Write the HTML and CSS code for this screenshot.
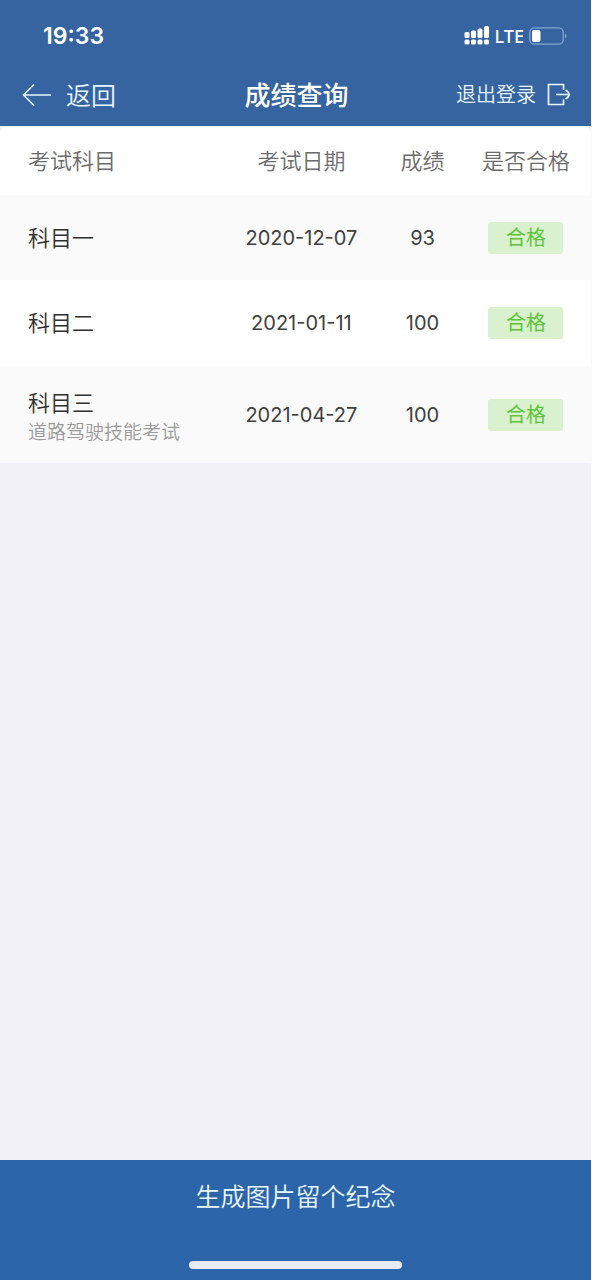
FILE: index.html
```html
<!DOCTYPE html>
<html lang="zh-CN">
<head>
<meta charset="utf-8">
<meta name="viewport" content="width=device-width, initial-scale=1">
<title>成绩查询</title>
<link rel="stylesheet" href="styles.css">
</head>
<body>
<div class="app">
  <header class="top">
    <div class="status">
      <time class="clock">19:33</time>
      <div class="indicators">
        <svg class="signal" width="26" height="20" viewBox="0 0 26 20" fill="#fff" aria-hidden="true">
          <rect x="0.500" y="13.500" width="5" height="5" rx="1.500"/><rect x="7" y="13.500" width="5" height="5" rx="1.500"/><rect x="13.500" y="13.500" width="5" height="5" rx="1.500"/><rect x="20" y="13.500" width="5" height="5" rx="1.500"/>
          <rect x="0.500" y="6" width="5" height="6" rx="1.500"/><rect x="7" y="4.500" width="5" height="7.500" rx="1.500"/><rect x="13.500" y="2.500" width="5" height="9.500" rx="1.500"/><rect x="20" y="0" width="5" height="12" rx="1.500"/>
        </svg>
        <span class="network">LTE</span>
        <svg class="battery" width="38" height="18" viewBox="0 0 38 18" aria-hidden="true">
          <rect x="0.800" y="0.800" width="33.400" height="16.400" rx="4.500" fill="none" stroke="#86a6d0" stroke-width="1.300"/>
          <rect x="3" y="3" width="8.500" height="12" rx="2" fill="#fff"/>
          <path d="M36 6.500c2 .8 2 4.200 0 5z" fill="#86a6d0"/>
        </svg>
      </div>
    </div>
    <nav class="bar">
      <a class="back" href="#">
        <svg width="30" height="24" viewBox="0 0 30 24" fill="none" stroke="#e9f5ff" stroke-width="1.500" aria-hidden="true"><path d="M29 12H1.500M12 1.500L1.500 12 12 22.500"/></svg>
        <span>返回</span>
      </a>
      <h1 class="title">成绩查询</h1>
      <a class="logout" href="#">
        <span>退出登录</span>
        <svg width="24" height="24" viewBox="0 0 24 24" fill="none" stroke="#e9f5ff" stroke-width="1.700" aria-hidden="true"><path d="M16.500 7V1.500H1.500V21.500H16.500V16.500M9 11.500H22.500M18.500 7C20.500 8 22 9.500 22.500 11.500 22 13.500 20.500 15 18.500 16"/></svg>
      </a>
    </nav>
  </header>
  <main class="content">
    <table class="scores">
      <thead>
        <tr><th class="subject" scope="col">考试科目</th><th class="date" scope="col">考试日期</th><th class="score" scope="col">成绩</th><th class="result" scope="col">是否合格</th></tr>
      </thead>
      <tbody>
        <tr><td class="subject">科目一</td><td>2020-12-07</td><td>93</td><td><span class="tag">合格</span></td></tr>
        <tr><td class="subject">科目二</td><td>2021-01-11</td><td>100</td><td><span class="tag">合格</span></td></tr>
        <tr class="detailed"><td class="subject">科目三<small class="note">道路驾驶技能考试</small></td><td>2021-04-27</td><td>100</td><td><span class="tag">合格</span></td></tr>
      </tbody>
    </table>
  </main>
  <footer class="bottom">
    <button class="generate" type="button">生成图片留个纪念</button>
    <div class="home"></div>
  </footer>
</div>
</body>
</html>
```
FILE: styles.css
```css
* { box-sizing: border-box; }

body {
  margin: 0;
  background: #f1f1f7;
  font-family: Inter, "Noto Sans CJK SC", sans-serif;
}

.app {
  display: flex;
  flex-direction: column;
  min-height: 100vh;
  border-right: 1px solid #fafafc;
}

.top {
  background: #3564a0;
  color: #fff;
}

.status {
  display: flex;
  justify-content: space-between;
  align-items: center;
  height: 64px;
  padding: 8px 24px 0 43px;
}

.clock {
  font-size: 23px;
  font-weight: 600;
}

.indicators {
  display: flex;
  align-items: center;
  gap: 5px;
}

.network {
  font-family: "Noto Sans", sans-serif;
  font-size: 18px;
  font-weight: 500;
  line-height: 20px;
}

.bar {
  display: grid;
  grid-template-columns: 1fr auto 1fr;
  align-items: center;
  height: 62px;
  padding: 0 20px 0 22px;
}

.back,
.logout {
  display: flex;
  align-items: center;
  color: #e9f5ff;
  text-decoration: none;
}

.back span,
.logout span,
.title {
  padding-bottom: 3px;
}

.back {
  gap: 14px;
  font-size: 25px;
  font-weight: 350;
}

.logout {
  justify-content: flex-end;
  gap: 11px;
  font-size: 20px;
  font-weight: 350;
}

.title {
  margin: 0;
  font-size: 26px;
  font-weight: 500;
}

.content { flex: 1; }

.scores {
  width: 100%;
  table-layout: fixed;
  border-collapse: collapse;
  border-radius: 8px 8px 0 0;
  background: #fff;
  color: #404040;
  font-size: 20px;
  text-align: center;
}

.scores th {
  height: 69px;
  padding: 0 0 4px;
  color: #6c6c6c;
  font-size: 22px;
  font-weight: 350;
}

.scores td {
  height: 86px;
  padding: 0;
}

.scores tbody tr:nth-child(odd) { background: #fafafa; }

.scores tbody tr:first-child td { height: 85px; }

.scores .detailed td { height: 97px; }

.scores .subject {
  width: 37%;
  padding-left: 28px;
  text-align: left;
}

.scores td.subject {
  color: #303030;
  font-size: 22px;
  font-weight: 350;
  line-height: 32px;
}

.scores .detailed .subject { padding-top: 5px; }

.date { width: 28%; }
.score { width: 13%; }
.result { width: 22%; }

.note {
  display: block;
  color: #9b9b9b;
  font-size: 19px;
  line-height: 28px;
}

.tag {
  display: inline-block;
  width: 75px;
  border-radius: 3px;
  background: #daf1cf;
  color: #60c43a;
  line-height: 32px;
  vertical-align: middle;
}

.bottom {
  display: flex;
  flex-direction: column;
  align-items: center;
  justify-content: space-between;
  height: 120px;
  padding-bottom: 11px;
  background: #2c65a9;
}

.generate {
  width: 100%;
  height: 72px;
  padding: 0 0 3px;
  border: 0;
  background: none;
  color: #e9f7ff;
  font: inherit;
  font-size: 25px;
  font-weight: 350;
}

.home {
  width: 36%;
  height: 8px;
  border-radius: 4px;
  background: #e8ecf0;
}
```
